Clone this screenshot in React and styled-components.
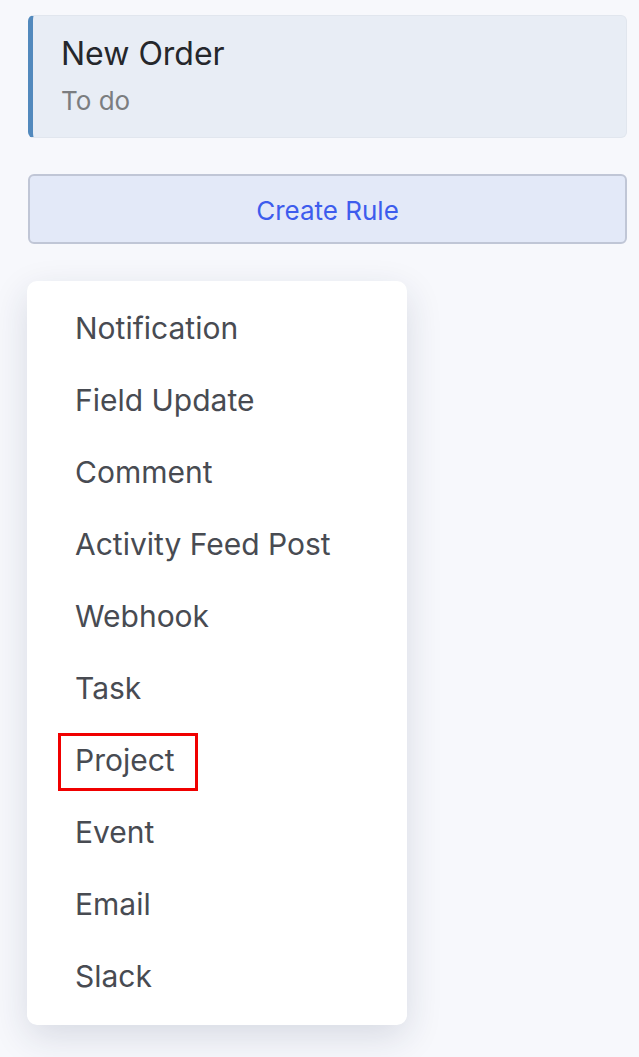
import styled, { createGlobalStyle } from 'styled-components';

const GlobalStyle = createGlobalStyle`
	body {
		margin: 0;
		background: #f7f8fc;
		font-family: Inter, 'Noto Sans', sans-serif;
	}
`;

const Page = styled.div`
	display: flex;
	flex-direction: column;
	align-items: flex-start;
	padding: 15px 12px 32px 28px;
`;

const StatusCard = styled.div`
	align-self: stretch;
	box-sizing: border-box;
	height: 123px;
	display: flex;
	flex-direction: column;
	justify-content: center;
	gap: 12px;
	padding: 0 28px 2px;
	background: #e8edf5;
	border: 1px solid #e1e6ee;
	border-left: 5px solid #5289bd;
	border-radius: 6px;
`;

const Title = styled.div`
	font-size: 32px;
	color: #25272b;
	line-height: 38px;
`;

const Subtitle = styled.div`
	font-size: 26px;
	color: #7b7d80;
	line-height: 32px;
`;

const CreateButton = styled.button`
	align-self: stretch;
	margin-top: 36px;
	height: 70px;
	padding-top: 4px;
	background: #e3e9f8;
	border: 2px solid #c0c6d6;
	border-radius: 6px;
	color: #3d5ced;
	font-family: Inter, 'Noto Sans', sans-serif;
	font-size: 26px;
	cursor: pointer;
`;

const Menu = styled.ul`
	list-style: none;
	margin: 37px 0 0 -1px;
	padding: 11px 0 13px;
	width: 380px;
	background: #fff;
	border-radius: 10px;
	box-shadow: 0 12px 36px rgba(30, 40, 80, 0.14);
`;

const MenuItem = styled.li`
	height: 72px;
	display: flex;
	align-items: center;
	padding-left: 48px;
	font-size: 30px;
	color: #484b52;
`;

const Label = styled.span`
	${(p) =>
		p.$marked &&
		`
		padding: 6px 20px 10px 14px;
		margin: 3px 0 0 -17px;
		border: 3px solid #f00000;
	`}
`;

const actions = [
	'Notification',
	'Field Update',
	'Comment',
	'Activity Feed Post',
	'Webhook',
	'Task',
	'Project',
	'Event',
	'Email',
	'Slack',
];

function App() {
	return (
		<>
			<GlobalStyle />
			<Page>
				<StatusCard>
					<Title>New Order</Title>
					<Subtitle>To do</Subtitle>
				</StatusCard>
				<CreateButton>Create Rule</CreateButton>
				<Menu>
					{actions.map((a) => (
						<MenuItem key={a}>
							<Label $marked={a === 'Project'}>{a}</Label>
						</MenuItem>
					))}
				</Menu>
			</Page>
		</>
	);
}

export default App;
